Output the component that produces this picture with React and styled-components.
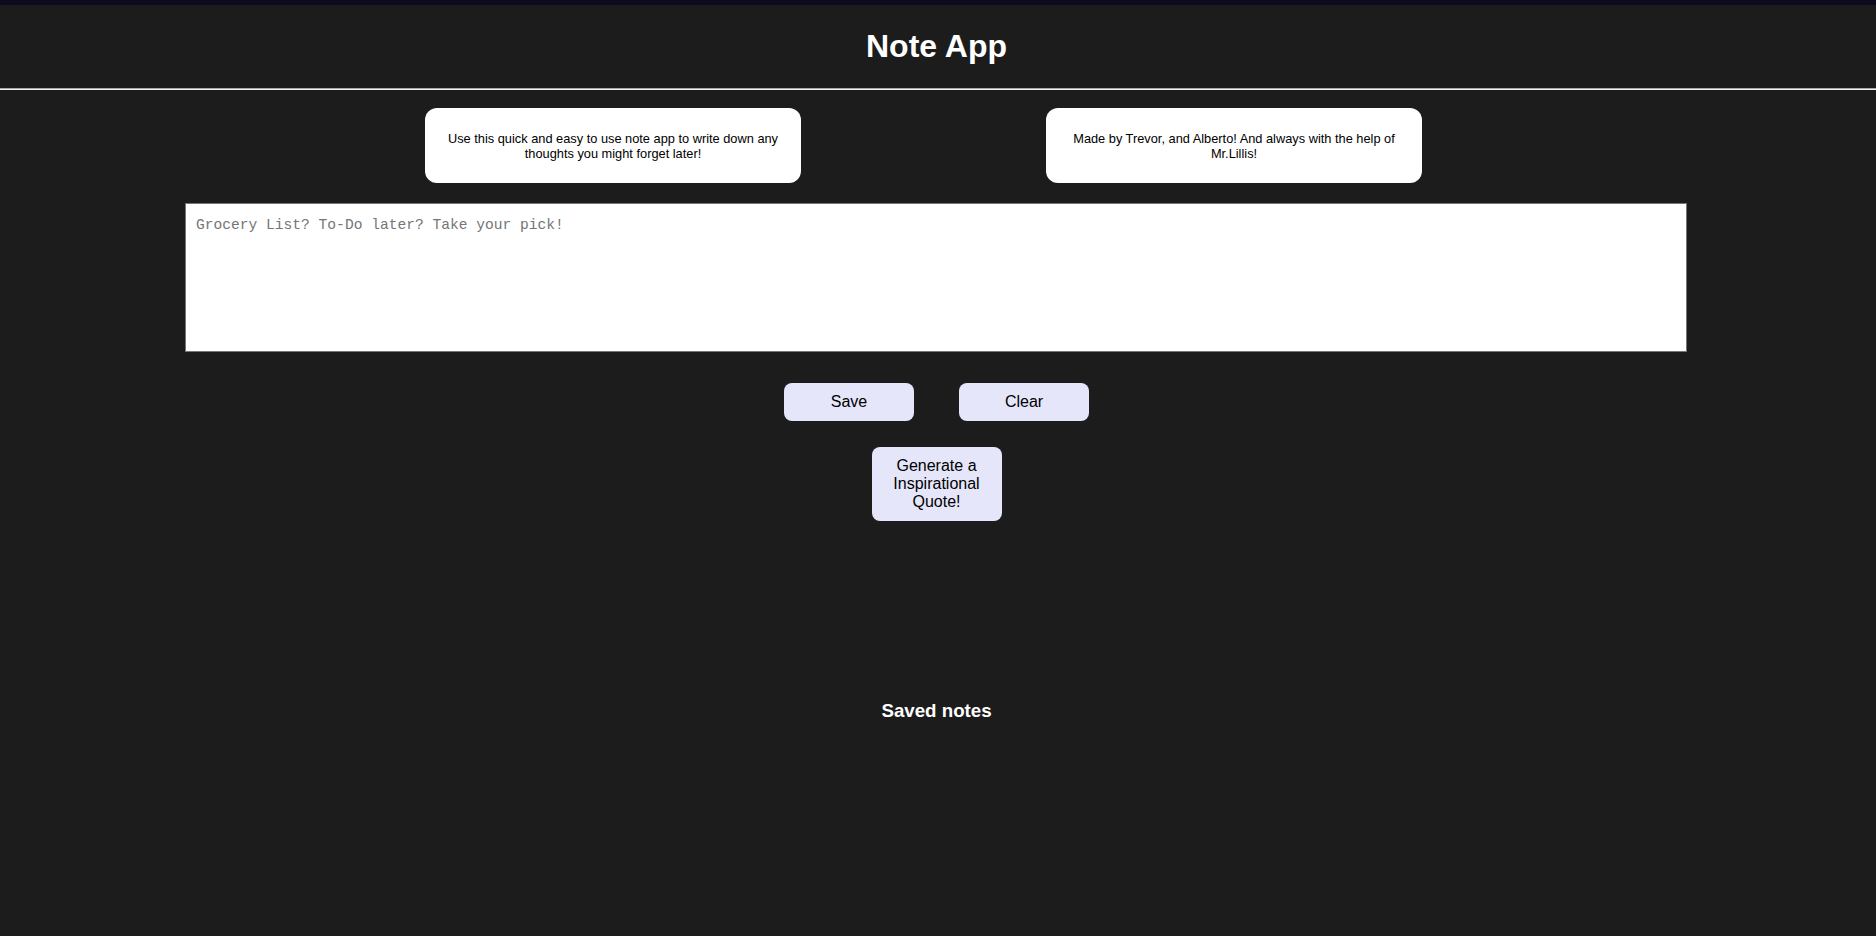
import React from "react";
import styled, { createGlobalStyle } from "styled-components";

const GlobalStyle = createGlobalStyle`
  html, body {
    margin: 0;
    padding: 0;
    background-color: #1c1c1c;
    font-family: "Liberation Sans", Arial, sans-serif;
  }
`;

const Page = styled.div`
  min-height: 936px;
  background-color: #1c1c1c;
  border-top: 5px solid #0c0a1e; /* dark strip on top */
  display: flex;
  flex-direction: column;
`;

const Header = styled.header`
  height: 83px;
  display: flex;
  align-items: center;
  justify-content: center;
  padding-right: 3px;
  border-bottom: 1px solid #a8a8a8;
  box-shadow: 0 1px 0 #f2f2f2;
`;

const Title = styled.h1`
  margin: 0;
  font-size: 32px;
  font-weight: bold;
  color: #fff;
`;

/* content is centred ~1.5px left of the page middle */
const Main = styled.main`
  display: flex;
  flex-direction: column;
  padding-right: 3px;
`;

const InfoRow = styled.section`
  display: flex;
  justify-content: center;
  gap: 245px;
  margin-top: 19px;
  padding-right: 26px;
`;

const InfoCard = styled.div`
  width: 376px;
  height: 75px;
  box-sizing: border-box;
  padding: 0 20px;
  display: flex;
  align-items: center;
  justify-content: center;
  text-align: center;
  background-color: #fff;
  border-radius: 12px;
  color: #000;
  font-size: 12.8px;
  line-height: 15px;
`;

const EditorWrap = styled.div`
  margin-top: 20px;
  padding: 0 186px 0 185px;
`;

const NoteInput = styled.textarea`
  display: block;
  width: 100%;
  height: 149px;
  box-sizing: border-box;
  padding: 13px 10px;
  border: 1px solid #767676;
  background-color: #fff;
  resize: none;
  font-family: "Liberation Mono", "DejaVu Sans Mono", monospace;
  font-size: 14.6px;
  color: #000;

  &::placeholder {
    color: #757575;
  }
`;

const ButtonRow = styled.div`
  display: flex;
  justify-content: center;
  gap: 45px;
  margin-top: ${(p) => p.$top || 31}px;
`;

const ActionButton = styled.button`
  width: 130px;
  height: ${(p) => (p.$tall ? 74 : 38)}px;
  padding: 0 6px;
  border: none;
  border-radius: 8px;
  background-color: #e6e6fa;
  color: #000;
  font-family: "Liberation Sans", Arial, sans-serif;
  font-size: 16px;
  cursor: pointer;
`;

const SavedTitle = styled.h3`
  margin: 179px 0 0;
  text-align: center;
  font-size: 18.72px;
  font-weight: bold;
  color: #fff;
`;

const NotesList = styled.div`
  display: flex;
  flex-direction: column;
  align-items: center;
`;

const App = () => {
  return (
    <>
      <GlobalStyle />
      <Page>
        <Header>
          <Title>Note App</Title>
        </Header>
        <Main>
          <InfoRow>
            <InfoCard>
              Use this quick and easy to use note app to write down any thoughts
              you might forget later!
            </InfoCard>
            <InfoCard>
              Made by Trevor, and Alberto! And always with the help of
              Mr.Lillis!
            </InfoCard>
          </InfoRow>
          <EditorWrap>
            <NoteInput placeholder="Grocery List? To-Do later? Take your pick!" />
          </EditorWrap>
          <ButtonRow>
            <ActionButton>Save</ActionButton>
            <ActionButton>Clear</ActionButton>
          </ButtonRow>
          <ButtonRow $top={26}>
            <ActionButton $tall>Generate a Inspirational Quote!</ActionButton>
          </ButtonRow>
          <SavedTitle>Saved notes</SavedTitle>
          <NotesList />
        </Main>
      </Page>
    </>
  );
};

export default App;
